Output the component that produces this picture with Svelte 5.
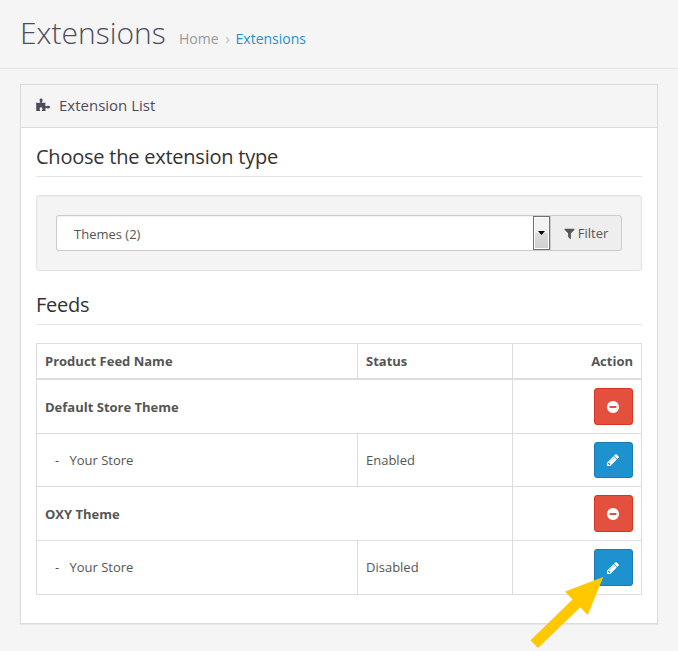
<script>
  const rows = [
    { name: 'Default Store Theme', group: true, h: 54 },
    { name: 'Your Store', status: 'Enabled', h: 53 },
    { name: 'OXY Theme', group: true, h: 54 },
    { name: 'Your Store', status: 'Disabled', h: 54 }
  ];
</script>

<div class="page">
  <header>
    <h1>Extensions</h1>
    <nav><span>Home</span><i>›</i><a href="#top">Extensions</a></nav>
  </header>

  <section class="panel">
    <div class="heading">
      <svg width="15" height="14" viewBox="0 0 15 14" fill="#4c4d5a"><path d="M0.200 4.600Q2.200 5.200 4.300 4.600Q4.700 4.200 3.800 3.200Q3 .7 5 .6Q7.200.7 6.400 3.200Q5.500 4.200 6 4.700Q7.800 5 9.500 4.400Q9.300 6.200 9.300 7.600Q9.700 8.500 11 8Q13.900 7.200 14 9.100Q13.900 11.100 11 10.200Q9.600 9.700 9.400 10.700L9.600 13H6Q5.500 12.600 6.400 11.400Q6.800 9.400 5 9.300Q3.200 9.400 3.700 11.400Q4.700 12.600 4 13H.2Z"/></svg>
      <span>Extension List</span>
    </div>
    <div class="body">
      <h2>Choose the extension type</h2>
      <div class="well">
        <div class="select"><span>Themes (2)</span><b class="drop"><svg width="7" height="4" viewBox="0 0 7 4"><path d="M0 0h7L3.500 4z"/></svg></b></div>
        <button class="filter"><svg width="13" height="13" viewBox="0 0 1792 1792" fill="#555"><path d="M1595 295q17 41-14 70l-493 493v742q0 42-39 59-13 5-25 5-27 0-45-19l-256-256q-19-19-19-45v-486l-493-493q-31-29-14-70 17-39 59-39h1280q42 0 59 39z"/></svg><span>Filter</span></button>
      </div>
      <h2 class="feeds">Feeds</h2>
      <div class="table">
        <div class="row head"><div class="cell name">Product Feed Name</div><div class="cell status">Status</div><div class="cell action">Action</div></div>
        {#each rows as r}
          <div class="row" style="height:{r.h}px">
            {#if r.group}
              <div class="cell wide">{r.name}</div>
            {:else}
              <div class="cell name sub"><span class="dash">-</span>{r.name}</div>
              <div class="cell status">{r.status}</div>
            {/if}
            <div class="cell action">
              <button class="btn" class:danger={r.group} aria-label={r.group ? 'Uninstall' : 'Edit'}>
                <svg width="14" height="14" viewBox="0 0 1792 1792" fill="#fff">
                  {#if r.group}
                    <path d="M1344 960v-128q0-26-19-45t-45-19h-768q-26 0-45 19t-19 45v128q0 26 19 45t45 19h768q26 0 45-19t19-45zm320-64q0 209-103 385.500t-279.500 279.500-385.500 103-385.500-103-279.500-279.500-103-385.500 103-385.500 279.500-279.500 385.500-103 385.500 103 279.500 279.500 103 385.500z"/>
                  {:else}
                    <path d="M491 1536l91-91-235-235-91 91v107h128v128h107zm523-928q0-22-22-22-10 0-17 7l-542 542q-7 7-7 17 0 22 22 22 10 0 17-7l542-542q7-7 7-17zm-54-192l416 416-832 832h-416v-416zm683 96q0 53-37 90l-166 166-416-416 166-165q36-38 90-38 53 0 91 38l235 234q37 39 37 91z"/>
                  {/if}
                </svg>
              </button>
            </div>
          </div>
        {/each}
      </div>
    </div>
  </section>

  <svg class="arrow" width="76" height="74" viewBox="0 0 76 74"><path d="M73.300 0L57.700 38L50.300 30.300L8 71L.5 63.300L42.500 22.500L35 14.500Z" fill="#ffc800"/></svg>
</div>

<style>
  :global(body) { background: #f5f5f5; }
  .page { position: relative; box-sizing: border-box; width: 678px; height: 651px; overflow: hidden; background: #f5f5f5; font: 13px/20px "Open Sans", sans-serif; color: #555; }
  header { box-sizing: border-box; height: 69px; border-bottom: 1px solid #e7e7e7; padding-left: 20px; display: flex; align-items: baseline; }
  h1 { margin: 0; padding-top: 13px; font-size: 30px; line-height: 40px; font-weight: 300; color: #4c4d5a; width: 159px; white-space: nowrap; }
  nav { display: flex; font-size: 14px; color: #999; }
  nav i { font-style: normal; color: #bbb; width: 17px; padding-left: 1px; box-sizing: border-box; text-align: center; }
  nav a { color: #1e91cf; text-decoration: none; }
  .panel { box-sizing: border-box; margin: 15px 20px 0; height: 540px; border: 1px solid #dcdcdc; background: #fff; box-shadow: 0 1px 1px rgba(0,0,0,.05); }
  .heading { box-sizing: border-box; height: 43px; border-bottom: 1px solid #dcdcdc; background: #f5f5f5; padding: 0 0 2px 15px; display: flex; align-items: center; gap: 8px; font-size: 15px; color: #4c4d5a; }
  .body { padding: 0 15px; }
  h2 { box-sizing: border-box; margin: 0; height: 49px; padding-top: 15px; border-bottom: 1px solid #e5e5e5; font-size: 20px; line-height: 28px; font-weight: 400; letter-spacing: -.23px; color: #333; }
  .well { box-sizing: border-box; height: 76px; margin-top: 18px; padding: 19px; border: 1px solid #e3e3e3; border-radius: 3px; background: #f4f4f4; display: flex; box-shadow: inset 0 1px 1px rgba(0,0,0,.04); }
  .select { box-sizing: border-box; width: 494px; height: 36px; border: 1px solid #ccc; border-right: 0; border-radius: 3px 0 0 3px; background: #fff; display: flex; justify-content: space-between; padding-left: 17px; line-height: 37px; box-shadow: inset 0 1px 1px rgba(0,0,0,.06); }
  .drop { box-sizing: border-box; width: 17px; height: 34px; border: 1px solid #707070; box-shadow: inset 0 0 0 1px #fff; background: linear-gradient(#f2f2f2 0 48%, #ddd 50%, #cfcfcf); display: flex; align-items: center; justify-content: center; }
  .filter { box-sizing: border-box; width: 72px; height: 36px; border: 1px solid #ccc; border-left-width: 1px; border-radius: 0 3px 3px 0; background: #eee; padding: 0 1px 0 0; display: flex; align-items: center; justify-content: center; gap: 2px; font: 13px/20px "Open Sans", sans-serif; color: #555; }
  .feeds { height: 54px; padding-top: 20px; }
  .table { margin-top: 18px; border: 1px solid #ddd; border-bottom: 0; }
  .row { box-sizing: border-box; display: flex; border-bottom: 1px solid #ddd; }
  .head { height: 36px; border-bottom-width: 2px; font-weight: 700; }
  .cell { box-sizing: border-box; padding-left: 8px; border-right: 1px solid #ddd; display: flex; align-items: center; }
  .name { width: 321px; }
  .status { width: 155px; }
  .wide { width: 476px; font-weight: 700; }
  .row:last-child .name, .row:last-child .status { padding-bottom: 1px; }
  .sub { padding-left: 18px; }
  .dash { width: 14.4px; }
  .action { flex: 1; border-right: 0; padding: 8px; justify-content: flex-end; align-items: stretch; }
  .head .action { padding: 0 8px; align-items: center; }
  .btn { box-sizing: border-box; width: 39px; padding: 0 1px 0 0; border: 1px solid #197bb0; border-radius: 3px; background: #1e91cf; display: flex; align-items: center; justify-content: center; }
  .danger { background: #e3503e; border-color: #d93421; }
  .arrow { position: absolute; left: 530px; top: 577px; }
</style>
